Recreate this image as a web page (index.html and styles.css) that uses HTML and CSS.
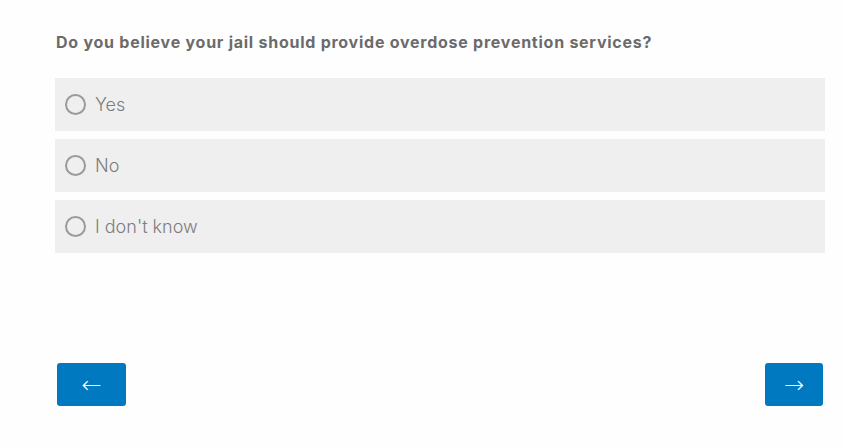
FILE: index.html
```html
<!DOCTYPE html>
<html lang="en">
<head>
<meta charset="utf-8">
<title>Survey</title>
<link rel="stylesheet" href="styles.css">
</head>
<body>
<main class="survey">
  <h2 class="question">Do you believe your jail should provide overdose prevention services?</h2>
  <div class="options">
    <label class="option"><span class="radio"></span><span class="label">Yes</span></label>
    <label class="option"><span class="radio"></span><span class="label">No</span></label>
    <label class="option"><span class="radio"></span><span class="label">I don't know</span></label>
  </div>
  <div class="nav">
    <button class="btn btn-prev">&larr;</button>
    <button class="btn btn-next">&rarr;</button>
  </div>
</main>
</body>
</html>
```
FILE: styles.css
```css
html, body {
  margin: 0;
  padding: 0;
  background: #fefefe;
}
.survey {
  padding: 31px 18px 0 55px;
  font-family: Inter, "Noto Sans", sans-serif;
}
.question {
  margin: 0 0 0 1px;
  font-size: 16px;
  font-weight: 700;
  color: #6b6b6b;
  line-height: 22px;
  letter-spacing: 0.75px;
}
.options {
  margin-top: 25px;
  display: flex;
  flex-direction: column;
  gap: 8px;
}
.option {
  height: 53px;
  background: #efefef;
  display: flex;
  align-items: center;
  padding-left: 10px;
  box-sizing: border-box;
}
.radio {
  width: 17px;
  height: 17px;
  border: 2px solid #9a9a9a;
  border-radius: 50%;
  flex: none;
}
.label {
  margin-left: 9px;
  font-size: 18px;
  font-weight: 300;
  color: #7d7d7d;
}
.nav {
  margin-top: 110px;
  display: flex;
  justify-content: space-between;
  padding: 0 2px 0 2px;
}
.btn {
  height: 43px;
  background: #0079c1;
  color: #fff;
  border: none;
  border-radius: 3px;
  font-size: 24px;
  font-weight: 300;
  font-family: "DejaVu Sans", sans-serif;
  padding: 0;
}
.btn-prev { width: 69px; }
.btn-next { width: 58px; }
```
